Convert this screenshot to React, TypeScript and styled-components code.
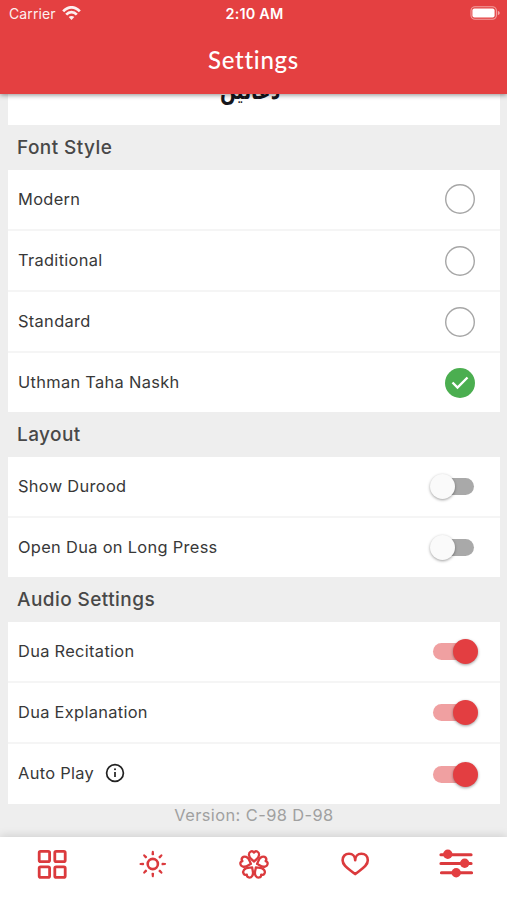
import React from "react";
import styled, { createGlobalStyle } from "styled-components";

const RED = "#e44041";

const GlobalStyle = createGlobalStyle`
  * { box-sizing: border-box; }
  body { margin: 0; background: #eeeeee; font-family: Inter, "Liberation Sans", sans-serif; }
`;

const Screen = styled.div`
  width: 507px;
  height: 900px;
  overflow: hidden;
  display: flex;
  flex-direction: column;
  background: #eeeeee;
`;

const Header = styled.header`
  flex: 0 0 94px;
  position: relative;
  z-index: 2;
  background: ${RED};
  color: #fff;
  box-shadow: 0 1px 5px rgba(0, 0, 0, 0.45);
`;

const StatusBar = styled.div`
  height: 28px;
  padding: 0 7px 0 9px;
  display: grid;
  grid-template-columns: 1fr auto 1fr;
  align-items: center;
  font-size: 14px;
  line-height: 28px;
`;

const Carrier = styled.div`
  display: flex;
  align-items: center;
  gap: 6px;
  letter-spacing: 0.1px;
  opacity: 0.92;

  svg { margin-top: -2px; }
`;

const Clock = styled.div`
  font-weight: 600;
  font-size: 14.4px;
  letter-spacing: 0.2px;
`;

const BatterySlot = styled.div`
  display: flex;
  justify-content: flex-end;
  margin-top: -2px;
`;

const Title = styled.h1`
  margin: 0;
  height: 64px;
  line-height: 64px;
  text-align: center;
  font-family: Lato, sans-serif;
  font-weight: 500;
  font-size: 24px;
  letter-spacing: 0.7px;
`;

const Content = styled.main`
  flex: 1 1 0;
  min-height: 0;
  padding: 0 7px 0 8px;
  overflow: hidden;
`;

const Preview = styled.div`
  height: 31px;
  background: #fff;
  display: flex;
  justify-content: center;
  align-items: flex-end;
  overflow: hidden;
`;

const PreviewText = styled.span`
  font-family: "DejaVu Sans", sans-serif;
  font-size: 24px;
  font-weight: 700;
  line-height: 40px;
  color: #16161c;
  margin: 0 7px 14px 0;
  transform: scaleX(0.77);
`;

const Heading = styled.h2`
  margin: 0;
  padding: 0 0 0 9px;
  height: 44.5px;
  line-height: 45px;
  font-size: 19px;
  font-weight: 500;
  letter-spacing: 0.43px;
  color: #484848;
`;

const Card = styled.section`
  background: #fff;
`;

const Row = styled.div`
  height: 59.5px;
  padding: 0 22px 0 10px;
  display: flex;
  align-items: center;
  justify-content: space-between;
  color: #383838;
  font-size: 16.4px;
  letter-spacing: 0.32px;

  & + & {
    height: 61.1px;
    border-top: 2px solid #f5f5f5;
  }
`;

const Label = styled.div`
  display: flex;
  align-items: center;
  gap: 11px;
  padding-bottom: 1.4px;
`;

const Radio = styled.span<{ $on?: boolean }>`
  width: 30px;
  height: 30px;
  margin-right: 3px;
  border-radius: 50%;
  display: flex;
  align-items: center;
  justify-content: center;
  box-shadow: ${(p) => (p.$on ? "none" : "inset 0 0 0 1.4px #a6a6a6")};
  background: ${(p) => (p.$on ? "#4bae50" : "#fff")};
`;

const Track = styled.span<{ $on?: boolean }>`
  width: ${(p) => (p.$on ? 45 : 44)}px;
  height: 17px;
  margin-right: ${(p) => (p.$on ? 0 : 4)}px;
  border-radius: 9px;
  display: flex;
  align-items: center;
  justify-content: ${(p) => (p.$on ? "flex-end" : "flex-start")};
  background: ${(p) =>
    p.$on ? "linear-gradient(90deg, #f0a0a1 36px, transparent 36px)" : "linear-gradient(90deg, transparent 10px, #a9a9a9 10px)"};
`;

const Thumb = styled.span<{ $on?: boolean }>`
  flex: none;
  width: 25px;
  height: 25px;
  border-radius: 50%;
  background: ${(p) => (p.$on ? "#e33e41" : "#fafafa")};
  box-shadow: 0 1px 3px rgba(0, 0, 0, 0.38);
`;

const Version = styled.div`
  height: 23px;
  line-height: 22px;
  text-align: center;
  font-size: 16.4px;
  letter-spacing: 0.42px;
  color: #a0a0a0;
`;

const TabBar = styled.nav`
  flex: 0 0 63px;
  position: relative;
  z-index: 2;
  background: #fff;
  box-shadow: 0 -1px 9px rgba(0, 0, 0, 0.14);
  display: grid;
  grid-template-columns: repeat(5, 1fr);
  justify-items: center;
  padding: 11px 0 0 1px;
`;

const TabIcon = styled.svg`
  width: 36px;
  height: 32px;
  display: block;
  overflow: visible;
  fill: none;
  stroke: #db3a3d;
  stroke-width: 2.6;
  stroke-linecap: round;
  stroke-linejoin: round;
`;

const Wifi = () => (
  <svg width="19" height="15" viewBox="0 0 19 15" fill="none" stroke="#fff" strokeWidth="2.7">
    <path d="M1.2 5.4C6-.1 13-.1 17.8 5.4" />
    <path d="M4.2 8.7C7.3 5.3 11.7 5.3 14.8 8.7" />
    <path d="M9.5 14L6.7 11.1C8.3 9.6 10.7 9.6 12.3 11.1Z" fill="#fff" stroke="none" />
  </svg>
);

const Battery = () => (
  <svg width="30" height="14" viewBox="0 0 30 14">
    <rect x="1" y=".8" width="25.4" height="12.4" rx="4" fill="none" stroke="#fff" strokeOpacity=".5" strokeWidth="1.1" />
    <rect x="2.4" y="2.4" width="22.2" height="9.2" rx="2" fill="#fff" />
    <path d="M27.8 4.7Q29.8 5.4 29.8 7T27.8 9.3Z" fill="#fff" fillOpacity=".55" />
  </svg>
);

const InfoIcon = () => (
  <svg width="20" height="20" viewBox="0 0 20 20" fill="none" stroke="#222">
    <circle cx="10" cy="10" r="8.4" strokeWidth="1.7" />
    <path d="M10 9v5" strokeWidth="1.7" />
    <circle cx="10" cy="6.3" r="1" fill="#222" stroke="none" />
  </svg>
);

const GridIcon = () => (
  <TabIcon viewBox="0 0 36 32">
    {[[5.2, 3.3], [20.8, 3.3], [5.2, 18.9], [20.8, 18.9]].map(([x, y]) => (
      <rect key={`${x}-${y}`} x={x} y={y} width="10.4" height="10.4" rx="1.4" strokeWidth="2.8" />
    ))}
  </TabIcon>
);

const SunIcon = () => (
  <TabIcon viewBox="0 0 36 32">
    <circle cx="17.8" cy="16" r="5.1" strokeWidth="2.6" />
    {[0, 45, 90, 135, 180, 225, 270, 315].map((a) => (
      <path key={a} d="M17.8 3.7L18.1 6.3H17.5Z" strokeWidth="2" transform={`rotate(${a} 17.8 16)`} />
    ))}
  </TabIcon>
);

const FlowerIcon = () => (
  <TabIcon viewBox="0 0 36 32">
    {[0, 72, 144, 216, 288].map((a) => (
      <path
        key={a}
        d="M18 13.6C16.6 11.8 13 10.4 12.9 6.9C12.8 3.5 16.3 2 18 4.6C19.7 2 23.2 3.5 23.1 6.9C23 10.4 19.4 11.8 18 13.6Z"
        strokeWidth="2.3"
        transform={`rotate(${a} 18 16.8)`}
      />
    ))}
  </TabIcon>
);

const HeartIcon = () => (
  <TabIcon viewBox="0 0 36 32">
    <path
      d="M18.2 12.2C18.2 8.4 15.7 5.7 12 5.7C8.2 5.7 5.6 8.4 5.6 12.2C5.6 18.3 12.6 21.3 18.2 26.1C23.8 21.3 30.8 18.3 30.8 12.2C30.8 8.4 28.2 5.7 24.4 5.7C20.7 5.7 18.2 8.4 18.2 12.2Z"
      strokeWidth="2.6"
    />
  </TabIcon>
);

const SlidersIcon = () => (
  <TabIcon viewBox="0 0 36 32">
    <path d="M2.9 6.7H33.1M2.9 15.4H33.1M3.4 24.7H33.6" strokeWidth="3" />
    <g fill="#e33e41" stroke="none">
      <circle cx="9.8" cy="6.3" r="4.7" />
      <circle cx="26.7" cy="15.2" r="4.7" />
      <circle cx="18.2" cy="24.7" r="4.7" />
    </g>
  </TabIcon>
);

const fontStyles = ["Modern", "Traditional", "Standard", "Uthman Taha Naskh"];

const Toggle = ({ on }: { on?: boolean }) => (
  <Track $on={on}>
    <Thumb $on={on} />
  </Track>
);

export default function App() {
  return (
    <>
      <GlobalStyle />
      <Screen>
        <Header>
          <StatusBar>
            <Carrier>
              Carrier <Wifi />
            </Carrier>
            <Clock>2:10 AM</Clock>
            <BatterySlot>
              <Battery />
            </BatterySlot>
          </StatusBar>
          <Title>Settings</Title>
        </Header>
        <Content>
          <Preview>
            <PreviewText dir="rtl" lang="ur">دعائیں</PreviewText>
          </Preview>
          <Heading>Font Style</Heading>
          <Card>
            {fontStyles.map((name, i) => (
              <Row key={name}>
                <Label>{name}</Label>
                <Radio $on={i === 3}>
                  {i === 3 && (
                    <svg width="18" height="14" viewBox="0 0 18 14" fill="none" stroke="#fff" strokeWidth="2.4">
                      <path d="M1.5 6.5L6.5 11.5L16.5 1.5" />
                    </svg>
                  )}
                </Radio>
              </Row>
            ))}
          </Card>
          <Heading>Layout</Heading>
          <Card>
            <Row><Label>Show Durood</Label><Toggle /></Row>
            <Row><Label>Open Dua on Long Press</Label><Toggle /></Row>
          </Card>
          <Heading>Audio Settings</Heading>
          <Card>
            <Row><Label>Dua Recitation</Label><Toggle on /></Row>
            <Row><Label>Dua Explanation</Label><Toggle on /></Row>
            <Row><Label>Auto Play <InfoIcon /></Label><Toggle on /></Row>
          </Card>
          <Version>Version: C-98 D-98</Version>
        </Content>
        <TabBar>
          <GridIcon />
          <SunIcon />
          <FlowerIcon />
          <HeartIcon />
          <SlidersIcon />
        </TabBar>
      </Screen>
    </>
  );
}
